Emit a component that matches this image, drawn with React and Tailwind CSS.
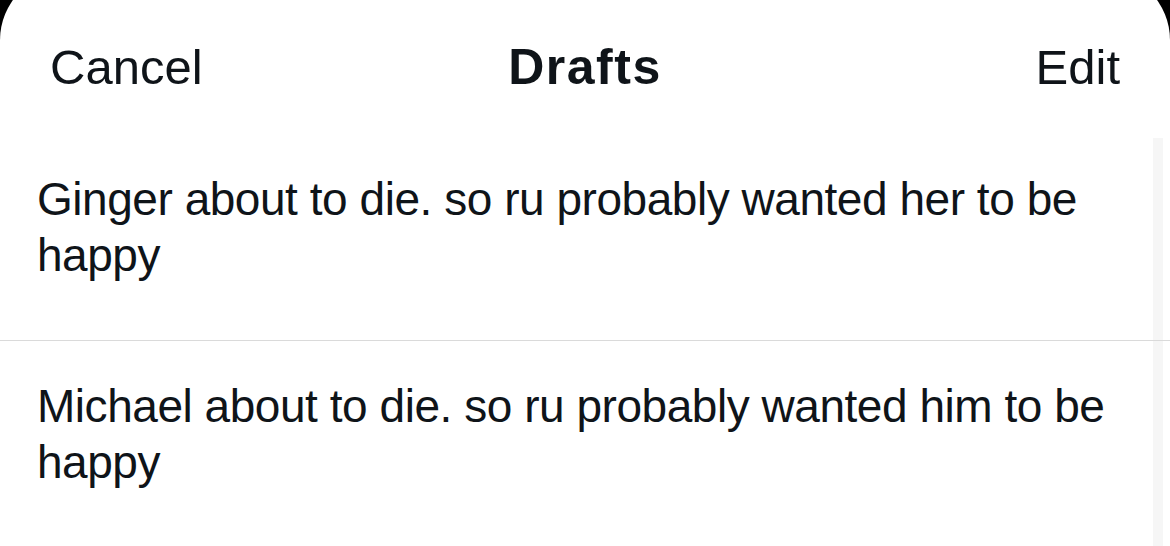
export default function App() {
  const drafts = [
    "Ginger about to die. so ru probably wanted her to be happy",
    "Michael about to die. so ru probably wanted him to be happy",
  ];
  return (
    <div className="w-[1170px] h-[546px] bg-black overflow-hidden" style={{ fontFamily: '"Liberation Sans", Arial, sans-serif' }}>
      <div className="relative mt-[-28px] h-[600px] bg-white rounded-t-[68px] text-[#0f1419]">
        <div className="grid grid-cols-[1fr_auto_1fr] h-[162px] items-center px-[50px] pt-[28px]">
          <span className="justify-self-start text-[49px] leading-none">Cancel</span>
          <span className="text-[50px] leading-none font-bold tracking-[1.5px]">Drafts</span>
          <span className="justify-self-end text-[49px] leading-none">Edit</span>
        </div>
        <div className="absolute right-[7px] top-[166px] w-[10px] h-[500px] bg-[#f6f6f6]" />
        <div className="relative flex flex-col">
          {drafts.map((t, i) => (
            <div key={i} className={`pl-[37px] pr-[60px] pt-[37px] pb-[57px] ${i === 0 ? "border-b border-[#dadada]" : ""}`}>
              <p className="text-[46px] leading-[56px] tracking-[-0.01em]">{t}</p>
            </div>
          ))}
        </div>
      </div>
    </div>
  );
}
